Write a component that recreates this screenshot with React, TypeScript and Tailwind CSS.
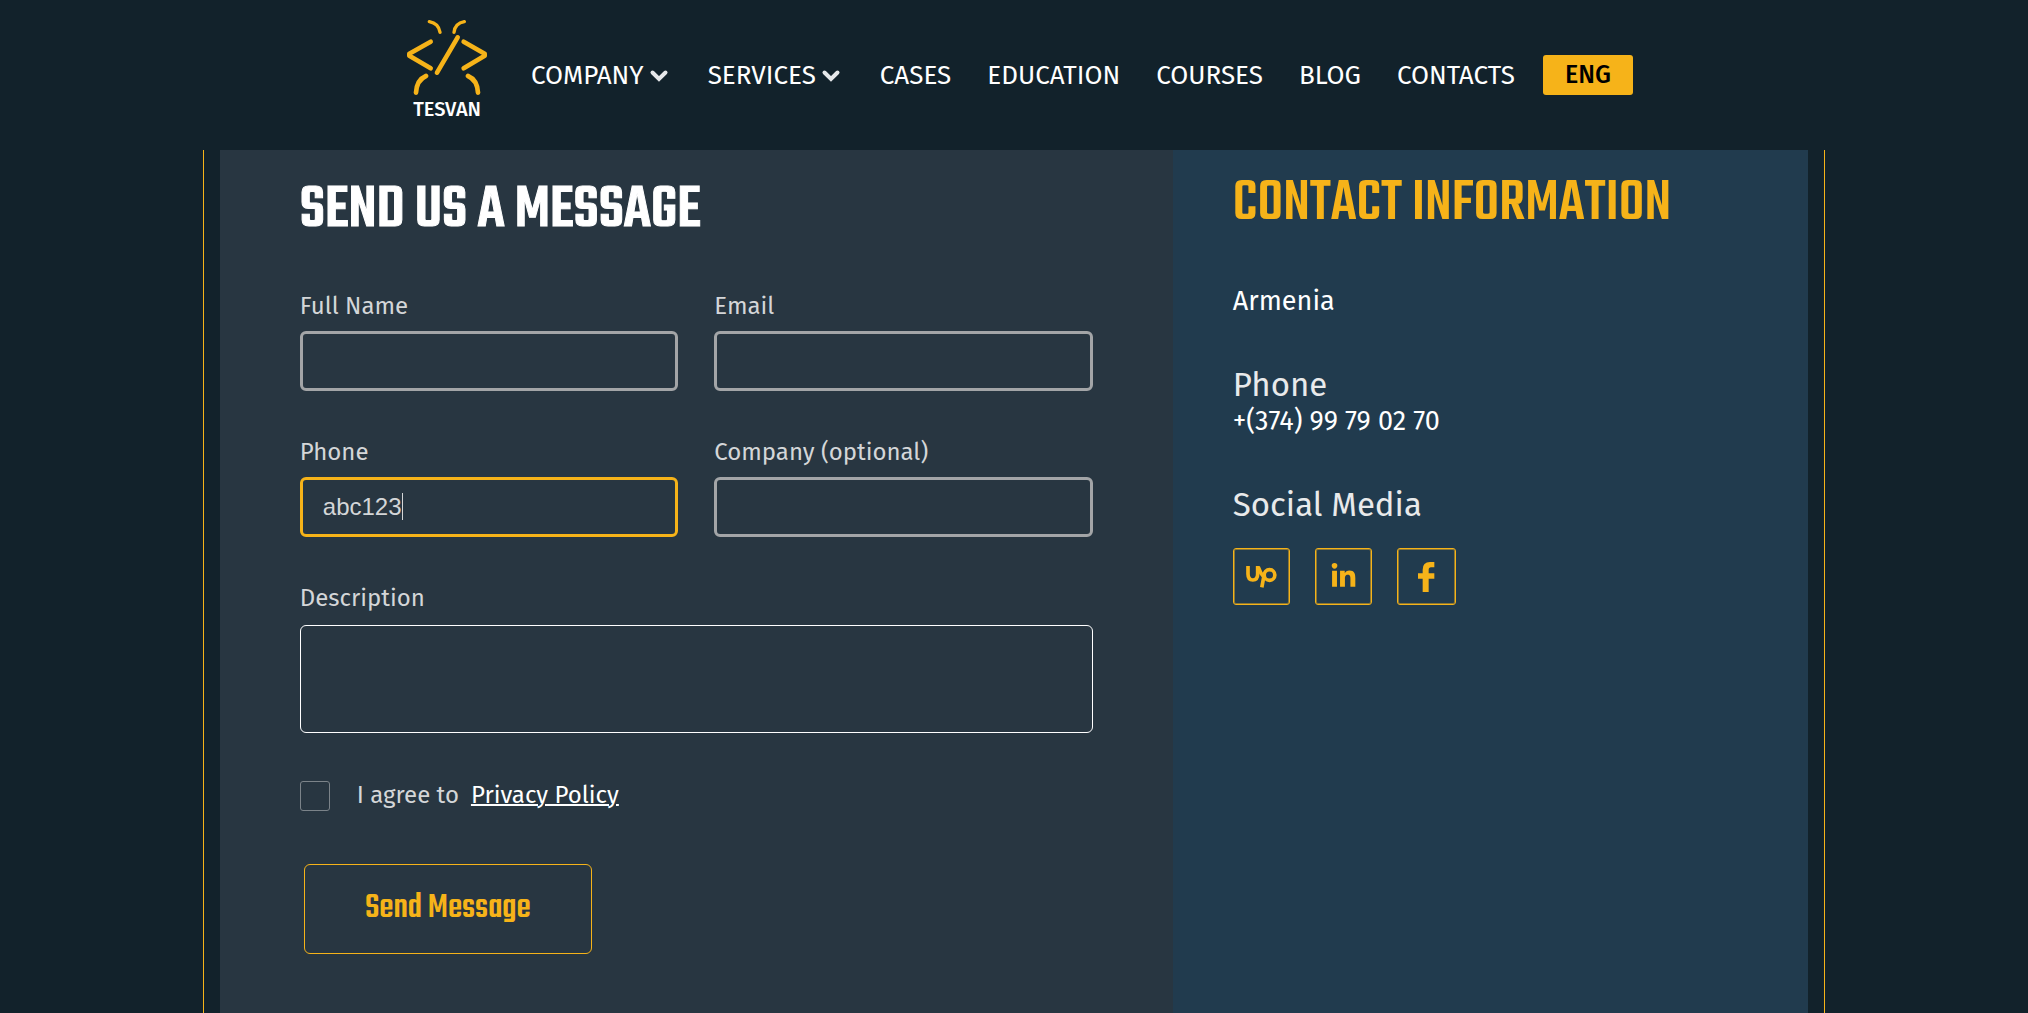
import { useState, type ReactNode } from "react";
import { FaLinkedinIn } from "react-icons/fa";

const navBase = "flex items-center text-[26px] leading-8 text-white";

function Chevron() {
  return (
    <svg className="mr-px ml-[3px] h-6 w-6" viewBox="0 0 24 24" fill="none" stroke="#e6e8ea" strokeWidth="4" strokeLinecap="round" strokeLinejoin="miter" aria-hidden="true">
      <path d="M5.500 8.500 12 15 18.500 8.500" />
    </svg>
  );
}

function Logo() {
  return (
    <a href="#" className="mt-5 flex w-20 flex-col items-center self-start">
      <svg className="h-[75px] w-20" viewBox="51 60 240 225" fill="none" stroke="#f6b319" strokeLinecap="round" strokeLinejoin="round" aria-hidden="true">
        <g strokeWidth="10">
          <path d="M118 65Q146 70 150 97" />
          <path d="M223 65Q195 70 192 97" />
        </g>
        <g strokeWidth="14">
          <path d="M122 125 58 161V167L122 205" />
          <path d="M221 125 284 161V167L221 205" />
          <path d="M203 112 141 218" />
          <path d="M108 228Q80 240 78 278" />
          <path d="M234 228Q262 240 264 278" />
        </g>
      </svg>
      <span className="mt-0.5 text-xl leading-6 font-medium text-white">TESVAN</span>
    </a>
  );
}

function NavLink({ children }: { children: ReactNode }) {
  return <a href="#" className={navBase}>{children}</a>;
}

function NavMenu({ children }: { children: ReactNode }) {
  return (
    <button type="button" className={navBase}>
      {children}
      <Chevron />
    </button>
  );
}

const labelClass = "text-2xl leading-[30px] text-[#d4d6d8]";

function Field({ id, label, type = "text" }: { id: string; label: string; type?: string }) {
  return (
    <div className="flex flex-col gap-2.5">
      <label htmlFor={id} className={labelClass}>{label}</label>
      <input id={id} type={type} className="h-[60px] w-full rounded-md border-3 border-[#a3a5a7] bg-transparent px-5 text-2xl text-[#d4d6d8] outline-none" />
    </div>
  );
}

function SocialLink({ label, width = "w-[57px]", children }: { label: string; width?: string; children: ReactNode }) {
  return (
    <a href="#" aria-label={label} className={"flex h-[57px] items-center justify-center rounded-[3px] border border-[#f6b319] text-[#f6b319] shadow-[inset_0_0_0_1px_#8c7734] " + width}>
      {children}
    </a>
  );
}

export default function App() {
  const [phone, setPhone] = useState("abc123");
  return (
    <div className="flex min-h-screen flex-col bg-[#12222b] font-['Fira_Sans','Noto_Sans',sans-serif]">
      <header className="flex h-[150px] items-center justify-center bg-[#12222b] pl-3">
        <Logo />
        <nav className="ml-11 flex items-center gap-9 pt-0.5">
          <NavMenu>COMPANY</NavMenu>
          <NavMenu>SERVICES</NavMenu>
          <NavLink>CASES</NavLink>
          <NavLink>EDUCATION</NavLink>
          <NavLink>COURSES</NavLink>
          <NavLink>BLOG</NavLink>
          <NavLink>CONTACTS</NavLink>
        </nav>
        <button type="button" className="ml-7 h-10 w-[90px] rounded-[3px] bg-[#f6b319] text-[25px] leading-8 font-medium text-black">ENG</button>
      </header>

      <main className="mx-auto flex w-4/5 flex-1 border-x border-[#f6b319] px-4">
        <section className="w-3/5 bg-[#283641] px-20 pt-[29px] pb-14">
          <h2 className="font-['Teko','Roboto_Condensed',sans-serif] text-[63px] leading-[64px] font-medium text-white [-webkit-text-stroke:1px_#ffffff]">SEND US A MESSAGE</h2>
          <form className="mt-12" onSubmit={(e) => e.preventDefault()}>
            <div className="grid grid-cols-2 gap-x-9 gap-y-[46px]">
              <Field id="name" label="Full Name" />
              <Field id="email" label="Email" type="email" />
              <div className="flex flex-col gap-2.5">
                <label htmlFor="phone" className={labelClass}>Phone</label>
                <div className="relative">
                  <input id="phone" type="tel" value={phone} onChange={(e) => setPhone(e.target.value)} className="h-[60px] w-full rounded-md border-3 border-[#f6b319] bg-transparent px-5 font-['Liberation_Sans',Arial,sans-serif] text-2xl text-[#d4d6d8] outline-none" />
                  <span className="absolute top-4 left-[102px] h-[27px] w-px bg-[#d4d6d8]" />
                </div>
              </div>
              <Field id="company" label="Company (optional)" />
              <div className="col-span-2 flex flex-col gap-3">
                <label htmlFor="description" className={labelClass}>Description</label>
                <textarea id="description" className="h-[108px] w-full resize-none rounded-md border border-white bg-transparent px-5 py-3 text-2xl text-[#d4d6d8] outline-none" />
              </div>
            </div>
            <div className="mt-12 flex items-start">
              <input id="agree" type="checkbox" className="size-[30px] appearance-none rounded-[3px] border border-[#7b8389]" />
              <label htmlFor="agree" className="ml-[27px] text-2xl leading-7 text-[#d4d6d8]">I agree to</label>
              <a href="#" className="ml-3 text-2xl leading-7 text-white underline decoration-2">Privacy Policy</a>
            </div>
            <button type="submit" className="mt-[53px] ml-1 h-[90px] w-72 rounded-md border border-[#f6b319] font-['Teko','Roboto_Condensed',sans-serif] text-4xl font-medium text-[#f6b319]">Send Message</button>
          </form>
        </section>

        <section className="w-2/5 bg-[#213b4e] px-[60px] pt-[23px]">
          <h2 className="font-['Teko','Roboto_Condensed',sans-serif] text-[60px] leading-[64px] font-medium whitespace-nowrap text-[#f6b319]">CONTACT INFORMATION</h2>
          <p className="mt-12 text-[27px] leading-8 text-white">Armenia</p>
          <h3 className="mt-12 text-[33px] leading-10 text-[#e9eaeb]">Phone</h3>
          <p className="text-[27px] leading-8 text-white">+(374) 99 79 02 70</p>
          <h3 className="mt-12 text-[33px] leading-10 text-[#e9eaeb]">Social Media</h3>
          <div className="mt-[23px] flex gap-[25px]">
            <SocialLink label="Upwork">
              <svg className="h-[22px] w-[31px]" viewBox="0 0 92 66" fill="none" stroke="currentColor" strokeWidth="11" aria-hidden="true">
                <path d="M5.500 0V24Q5.500 42 20 42T34.500 24V0" />
                <path d="M36 2Q42 22 55 34" />
                <circle cx="70" cy="27" r="16" />
                <path d="M47 64 54 26" />
              </svg>
            </SocialLink>
            <SocialLink label="LinkedIn">
              <FaLinkedinIn size={27} />
            </SocialLink>
            <SocialLink label="Facebook" width="w-[59px]">
              <svg className="h-[30px] w-[17px]" viewBox="0 0 51 90" fill="currentColor" aria-hidden="true">
                <path d="M14 90V50H0V34H14V23Q14 0 36 0H49V16H39Q32 16 32 24V34H49V50H32V90Z" />
              </svg>
            </SocialLink>
          </div>
        </section>
      </main>
    </div>
  );
}
